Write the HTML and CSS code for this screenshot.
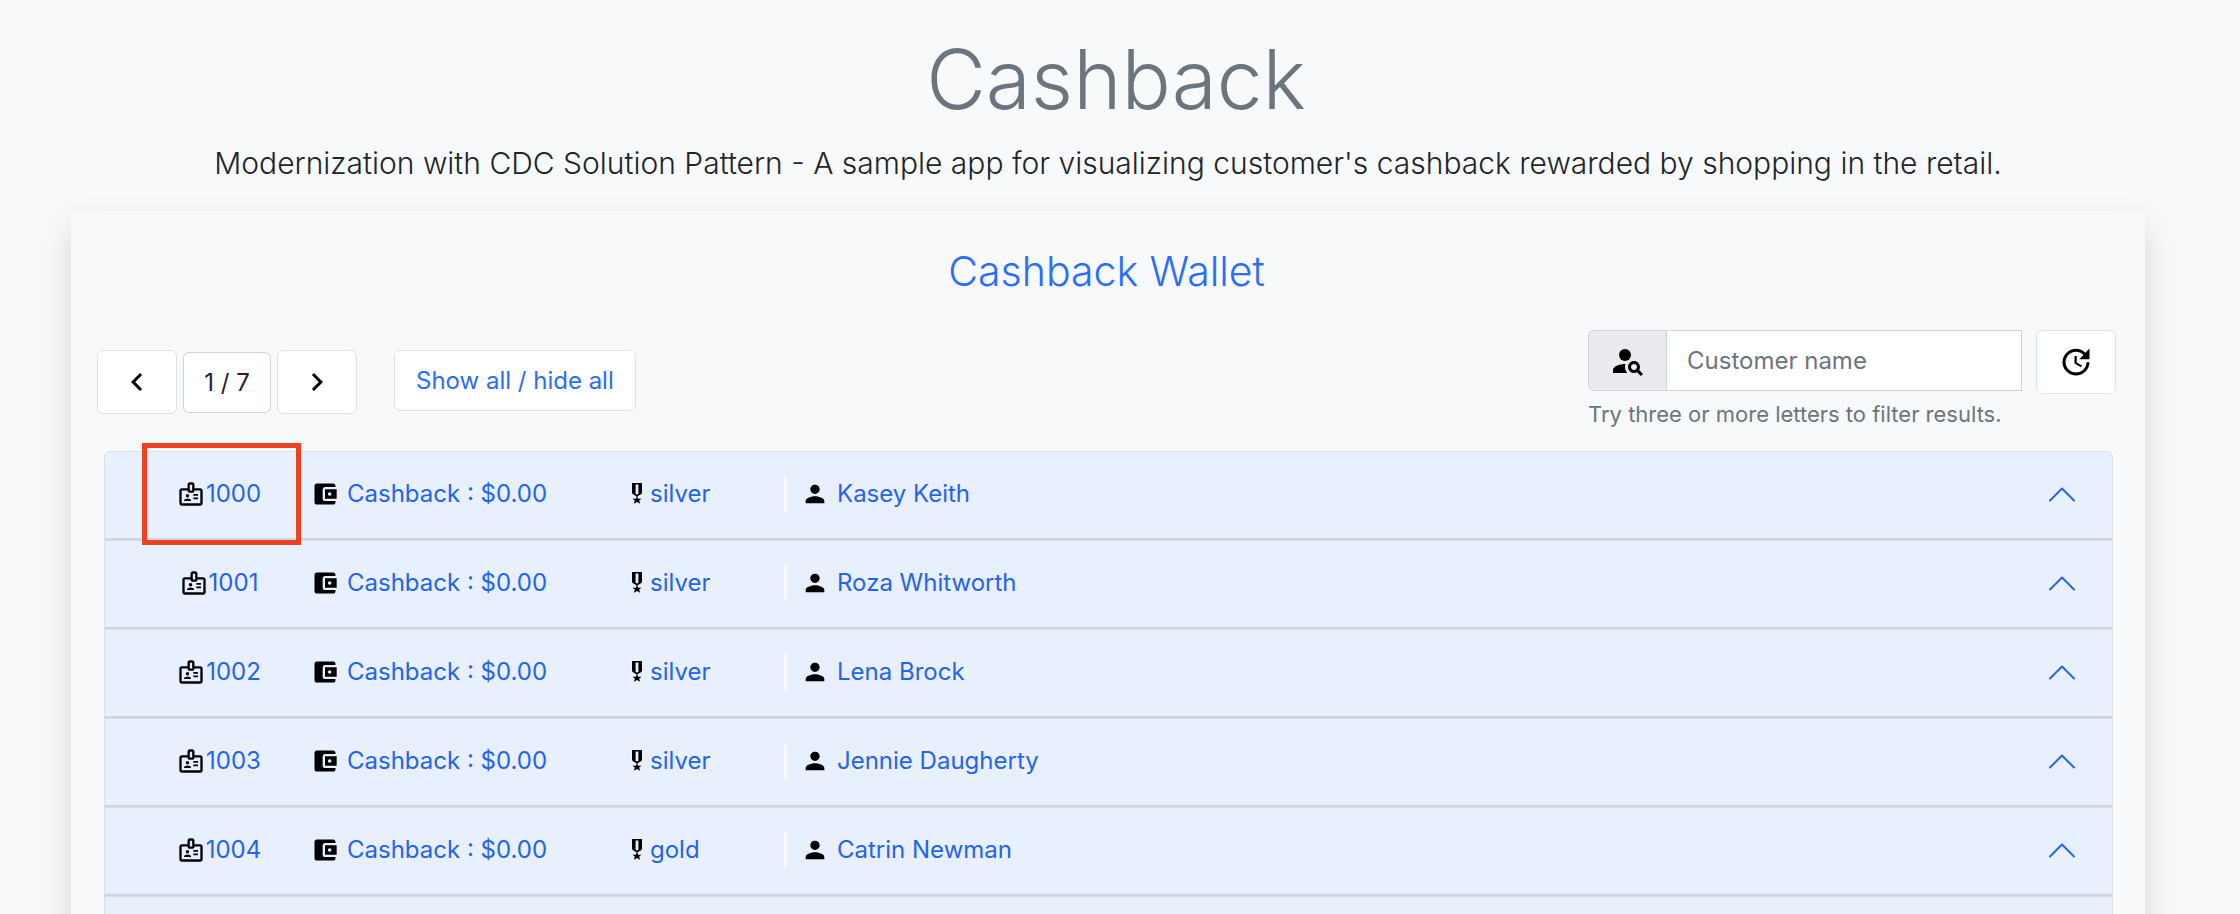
FILE: index.html
```html
<!DOCTYPE html>
<html lang="en">
<head>
<meta charset="utf-8">
<title>Cashback</title>
<link rel="stylesheet" href="styles.css">
</head>
<body>
<svg class="sprite" aria-hidden="true">
  <symbol id="badge" viewBox="0 0 24 24"><path d="M20 7h-5V4c0-1.100-.9-2-2-2h-2c-1.100 0-2 .9-2 2v3H4c-1.100 0-2 .9-2 2v11c0 1.100.9 2 2 2h16c1.100 0 2-.9 2-2V9c0-1.100-.9-2-2-2zm-9-3h2v5h-2V4zm9 16H4V9h5c0 1.100.9 2 2 2h2c1.100 0 2-.9 2-2h5v11z"/><circle cx="9" cy="13.500" r="1.500"/><path d="M11.080 16.180C10.440 15.900 9.740 15.750 9 15.750s-1.440.15-2.080.43c-.56.240-.92.780-.92 1.390V18h6v-.43c0-.61-.36-1.150-.92-1.390zM14 12h4v1.500h-4zM14 15h4v1.500h-4z"/></symbol>
  <symbol id="wallet" viewBox="0 0 24 24"><path d="M21 18v1c0 1.100-.9 2-2 2H5c-1.110 0-2-.9-2-2V5c0-1.100.89-2 2-2h14c1.100 0 2 .9 2 2v1h-9c-1.110 0-2 .9-2 2v8c0 1.100.89 2 2 2h9zm-9-2h10V8H12v8zm4-2.500c-.83 0-1.500-.67-1.500-1.500s.67-1.500 1.500-1.500 1.500.67 1.500 1.500-.67 1.500-1.500 1.500z"/></symbol>
  <symbol id="medal" viewBox="0 0 10 22"><path fill-rule="evenodd" d="M0 0h10v9.500c0 .8-.4 1.400-1 1.800L5.600 13.300V15l1 .7 3 .1-2.400 1.800.9 3.200L5 19l-3.100 1.800.9-3.200L.4 15.800l3-.1 1-.7v-1.700L1 11.300C.4 10.900 0 10.300 0 9.500zM3.600 1.500v9.300l1.400.8 1.400-.8V1.500z"/></symbol>
  <symbol id="person" viewBox="0 0 24 24"><path d="M12 12c2.210 0 4-1.790 4-4s-1.790-4-4-4-4 1.790-4 4 1.790 4 4 4zm0 2c-2.670 0-8 1.340-8 4v2h16v-2c0-2.660-5.330-4-8-4z"/></symbol>
  <symbol id="person-search" viewBox="0 0 24 24"><circle cx="10" cy="8" r="4"/><path d="M10.350 14.010C7.620 13.910 2 15.270 2 18v2h9.540c-2.470-2.760-1.230-5.890-1.190-5.990zM19.430 18.020c.36-.59.57-1.280.57-2.020 0-2.210-1.790-4-4-4s-4 1.790-4 4 1.790 4 4 4c.74 0 1.430-.22 2.020-.57L20.590 22 22 20.590l-2.570-2.570zM16 18c-1.100 0-2-.9-2-2s.9-2 2-2 2 .9 2 2-.9 2-2 2z"/></symbol>
  <symbol id="update" viewBox="0 0 24 24"><path d="M21 10.120h-6.780l2.740-2.820c-2.730-2.700-7.150-2.800-9.880-.1-2.730 2.710-2.730 7.080 0 9.790s7.150 2.710 9.880 0C18.320 15.650 19 14.080 19 12.100h2c0 1.980-.88 4.550-2.640 6.290-3.510 3.480-9.210 3.480-12.720 0-3.500-3.470-3.530-9.110-.02-12.580s9.140-3.470 12.650 0L21 3v7.120zM12.500 8v4.250l3.500 2.080-.72 1.210L11 13V8h1.500z"/></symbol>
  <symbol id="left" viewBox="0 0 24 24"><path d="M15.410 7.410 14 6l-6 6 6 6 1.410-1.410L10.830 12z"/></symbol>
  <symbol id="right" viewBox="0 0 24 24"><path d="M10 6 8.590 7.410 13.170 12l-4.580 4.590L10 18l6-6z"/></symbol>
  <symbol id="collapse" viewBox="0 0 28 16"><path d="M2 14.500 14 2.500l12 12" fill="none" stroke="#2563eb" stroke-width="2" stroke-linecap="round" stroke-linejoin="round"/></symbol>
</svg>
<main class="page">
  <header class="intro">
    <h1 class="title">Cashback</h1>
    <p class="lead">Modernization with CDC Solution Pattern - A sample app for visualizing customer's cashback rewarded by shopping in the retail.</p>
  </header>
  <section class="card">
    <h2 class="card-title">Cashback Wallet</h2>
    <div class="toolbar">
      <nav class="pager" aria-label="Pages">
        <button class="btn square" aria-label="Previous page"><svg class="icon-lg"><use href="#left"/></svg></button>
        <span class="page-count">1 / 7</span>
        <button class="btn square" aria-label="Next page"><svg class="icon-lg"><use href="#right"/></svg></button>
        <button class="btn toggle">Show all / hide all</button>
      </nav>
      <form class="search">
        <div class="field">
          <div class="input-group">
            <label class="prefix" for="customer" aria-label="Customer name"><svg class="icon-lg"><use href="#person-search"/></svg></label>
            <input class="input" id="customer" type="text" placeholder="Customer name">
          </div>
          <small class="help">Try three or more letters to filter results.</small>
        </div>
        <button class="btn square" type="button" aria-label="Refresh"><svg class="icon-lg"><use href="#update"/></svg></button>
      </form>
    </div>
    <ul class="list">
      <li class="item"><button class="row">
        <span class="cell id marked"><svg class="icon"><use href="#badge"/></svg>1000</span>
        <span class="cell wallet"><svg class="icon"><use href="#wallet"/></svg>Cashback : $0.00</span>
        <span class="cell"><svg class="medal"><use href="#medal"/></svg>silver</span>
        <span class="cell name"><svg class="icon"><use href="#person"/></svg>Kasey Keith</span>
        <svg class="collapse"><use href="#collapse"/></svg></button></li>
      <li class="item"><button class="row">
        <span class="cell id"><svg class="icon"><use href="#badge"/></svg>1001</span>
        <span class="cell wallet"><svg class="icon"><use href="#wallet"/></svg>Cashback : $0.00</span>
        <span class="cell"><svg class="medal"><use href="#medal"/></svg>silver</span>
        <span class="cell name"><svg class="icon"><use href="#person"/></svg>Roza Whitworth</span>
        <svg class="collapse"><use href="#collapse"/></svg></button></li>
      <li class="item"><button class="row">
        <span class="cell id"><svg class="icon"><use href="#badge"/></svg>1002</span>
        <span class="cell wallet"><svg class="icon"><use href="#wallet"/></svg>Cashback : $0.00</span>
        <span class="cell"><svg class="medal"><use href="#medal"/></svg>silver</span>
        <span class="cell name"><svg class="icon"><use href="#person"/></svg>Lena Brock</span>
        <svg class="collapse"><use href="#collapse"/></svg></button></li>
      <li class="item"><button class="row">
        <span class="cell id"><svg class="icon"><use href="#badge"/></svg>1003</span>
        <span class="cell wallet"><svg class="icon"><use href="#wallet"/></svg>Cashback : $0.00</span>
        <span class="cell"><svg class="medal"><use href="#medal"/></svg>silver</span>
        <span class="cell name"><svg class="icon"><use href="#person"/></svg>Jennie Daugherty</span>
        <svg class="collapse"><use href="#collapse"/></svg></button></li>
      <li class="item"><button class="row">
        <span class="cell id"><svg class="icon"><use href="#badge"/></svg>1004</span>
        <span class="cell wallet"><svg class="icon"><use href="#wallet"/></svg>Cashback : $0.00</span>
        <span class="cell"><svg class="medal"><use href="#medal"/></svg>gold</span>
        <span class="cell name"><svg class="icon"><use href="#person"/></svg>Catrin Newman</span>
        <svg class="collapse"><use href="#collapse"/></svg></button></li>
      <li class="item"><div class="row"></div></li>
    </ul>
  </section>
</main>
</body>
</html>
```
FILE: styles.css
```css
* { box-sizing: border-box; }
body {
  margin: 0;
  height: 100vh;
  overflow: hidden;
  background: #f8f9fb;
  color: #212529;
  font-family: Inter, "Liberation Sans", sans-serif;
  font-size: 24px;
  line-height: 36px;
}
button, input { font: inherit; color: inherit; }
svg { display: block; flex: none; }
.sprite { position: absolute; width: 0; height: 0; }
.page { padding: 28px 95px 0 71px; }
.intro { text-align: center; }
.title {
  margin: 0;
  padding-left: 16px;
  color: #6c757d;
  font-size: 82px;
  font-weight: 300;
  line-height: 104px;
}
.lead {
  margin: 8px 0 24px;
  font-size: 30px;
  font-weight: 300;
  line-height: 47px;
  white-space: nowrap;
}
.card {
  padding: 32px 29px 0 26px;
  background: #f8f9fb;
  border-radius: 6px;
  box-shadow: 0 16px 32px rgba(0, 0, 0, 0.15);
}
.card-title {
  margin: 0;
  color: #2a6df9;
  font-size: 41px;
  font-weight: 300;
  line-height: 56px;
  text-align: center;
}
.toolbar {
  display: flex;
  justify-content: space-between;
  align-items: flex-end;
  margin-top: 31px;
  padding-bottom: 21px;
}
.pager { display: flex; align-items: flex-start; gap: 6px; margin-bottom: 16px; }
.btn {
  display: flex;
  align-items: center;
  justify-content: center;
  padding: 0;
  background: #fff;
  border: 1px solid #dee2e6;
  border-radius: 6px;
}
.square { width: 80px; height: 64px; color: #000; }
.page-count {
  display: flex;
  align-items: center;
  justify-content: center;
  width: 88px;
  height: 61px;
  margin-top: 2px;
  background: #fff;
  border: 1px solid #ced4da;
  border-radius: 6px;
}
.toggle { height: 61px; margin-left: 31px; padding: 0 21px; color: #2a6df9; }
.search { display: flex; align-items: flex-start; gap: 14px; }
.input-group { display: flex; width: 434px; height: 61px; }
.prefix {
  display: flex;
  align-items: center;
  justify-content: center;
  width: 79px;
  background: #e9ebef;
  border: 1px solid #ced4da;
  border-radius: 6px 0 0 6px;
}
.input {
  flex: 1;
  min-width: 0;
  margin-left: -1px;
  padding: 0 20px;
  background: #fff;
  border: 1px solid #ced4da;
  border-radius: 0;
}
.input::placeholder { color: #6c757d; opacity: 1; }
.help { display: block; margin-top: 7px; color: #6c757d; font-size: 22px; line-height: 32px; }
.list {
  margin: 0 3px 0 7px;
  padding: 0;
  list-style: none;
  border: 1px solid #dcdfe3;
  border-radius: 6px 6px 0 0;
}
.item { padding-bottom: 1px; background: #dcdcdf; border-radius: 6px 6px 0 0; }
.item + .item { border-radius: 0; }
.row {
  display: grid;
  grid-template-columns: 154px 300px 134px 1fr auto;
  align-items: center;
  gap: 18px;
  width: 100%;
  height: 88px;
  padding: 0 36px 4px 37px;
  background: #e8f0fe;
  border: 0;
  border-radius: inherit;
  box-shadow: inset 0 -2px 0 #cdd5e0;
  color: #2563eb;
  text-align: left;
}
.cell { display: flex; align-items: center; gap: 8px; white-space: nowrap; }
.id { position: relative; justify-content: center; gap: 1px; }
.wallet { margin-left: -3px; }
.marked::after {
  content: "";
  position: absolute;
  inset: -33px -5px -33px 0;
  border: 5px solid #ee4023;
}
.name { height: 36px; padding-left: 14px; border-left: 3px solid #f8f9fb; }
.icon { width: 28px; height: 28px; fill: #000; }
.icon-lg { width: 36px; height: 36px; }
.medal { width: 10px; height: 22px; fill: #000; }
.collapse { width: 28px; height: 16px; }
```
